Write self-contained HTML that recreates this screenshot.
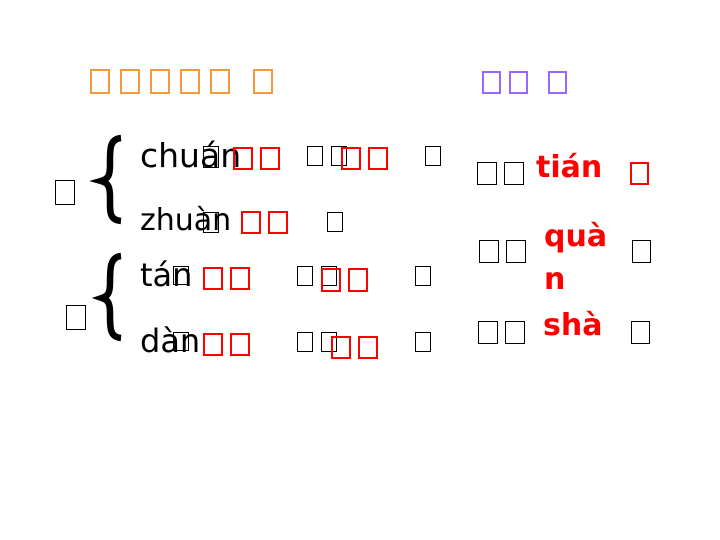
<!DOCTYPE html>
<html><head><meta charset="utf-8"><style>
body{margin:0;width:720px;height:540px;background:#fff;position:relative;overflow:hidden;font-family:"DejaVu Sans","Liberation Sans",sans-serif}
.b{position:absolute;box-sizing:border-box;border:1px solid #000}
.o{border-color:#f59a3c;border-width:2px}.p{border-color:#9966ff;border-width:2px}.r{border-color:#f00;border-width:2px}
.t{position:absolute;line-height:1;white-space:nowrap;color:#000}
.rb{color:#f00;font-weight:bold}
</style></head><body>
<div class="b o" style="left:90px;top:69px;width:20px;height:25px"></div>
<div class="b o" style="left:120px;top:69px;width:20px;height:25px"></div>
<div class="b o" style="left:150px;top:69px;width:20px;height:25px"></div>
<div class="b o" style="left:180px;top:69px;width:20px;height:25px"></div>
<div class="b o" style="left:210px;top:69px;width:20px;height:25px"></div>
<div class="b o" style="left:253px;top:69px;width:20px;height:25px"></div>
<div class="b p" style="left:482px;top:71px;width:19px;height:23px"></div>
<div class="b p" style="left:509px;top:71px;width:19px;height:23px"></div>
<div class="b p" style="left:548px;top:71px;width:19px;height:23px"></div>

<svg style="position:absolute;left:0;top:0" width="720" height="540">
<path d="M121,138 C109,139 110,150 110,165 C110,176 108,179 101,181 C108,183 110,186 110,197 C110,212 109,220 121,221" fill="none" stroke="#000" stroke-width="6.5"/>
<path d="M121,256 C110,257 110,268 110,283 C110,293 108,296 102,298 C108,300 110,303 110,313 C110,329 110,337 121,338" fill="none" stroke="#000" stroke-width="6.5"/>
</svg>

<div class="b" style="left:55px;top:180px;width:20px;height:25px"></div>
<div class="b" style="left:66px;top:305px;width:20px;height:25px"></div>

<div class="t" style="left:140px;top:139px;font-size:33px">chuán</div>
<div class="b" style="left:203px;top:146px;width:16px;height:22px"></div>
<div class="b r" style="left:233px;top:147px;width:20px;height:23px"></div>
<div class="b r" style="left:260px;top:147px;width:20px;height:23px"></div>
<div class="b" style="left:307px;top:146px;width:16px;height:20px"></div>
<div class="b" style="left:331px;top:146px;width:16px;height:20px"></div>
<div class="b r" style="left:341px;top:147px;width:20px;height:23px"></div>
<div class="b r" style="left:368px;top:147px;width:20px;height:23px"></div>
<div class="b" style="left:425px;top:146px;width:16px;height:20px"></div>

<div class="t" style="left:140px;top:206px;font-size:30px">zhuàn</div>
<div class="b" style="left:203px;top:212px;width:16px;height:21px"></div>
<div class="b r" style="left:241px;top:211px;width:20px;height:23px"></div>
<div class="b r" style="left:268px;top:211px;width:20px;height:23px"></div>
<div class="b" style="left:327px;top:212px;width:16px;height:20px"></div>

<div class="t" style="left:140px;top:259px;font-size:32px">tán</div>
<div class="b" style="left:173px;top:266px;width:16px;height:19px"></div>
<div class="b r" style="left:203px;top:267px;width:20px;height:23px"></div>
<div class="b r" style="left:230px;top:267px;width:20px;height:23px"></div>
<div class="b" style="left:297px;top:266px;width:16px;height:20px"></div>
<div class="b" style="left:321px;top:266px;width:16px;height:20px"></div>
<div class="b r" style="left:321px;top:268px;width:20px;height:24px"></div>
<div class="b r" style="left:348px;top:268px;width:20px;height:24px"></div>
<div class="b" style="left:415px;top:266px;width:16px;height:20px"></div>

<div class="t" style="left:140px;top:325px;font-size:32px">dàn</div>
<div class="b" style="left:173px;top:332px;width:16px;height:19px"></div>
<div class="b r" style="left:203px;top:333px;width:20px;height:23px"></div>
<div class="b r" style="left:230px;top:333px;width:20px;height:23px"></div>
<div class="b" style="left:297px;top:332px;width:16px;height:20px"></div>
<div class="b" style="left:321px;top:332px;width:16px;height:20px"></div>
<div class="b r" style="left:331px;top:336px;width:20px;height:23px"></div>
<div class="b r" style="left:358px;top:336px;width:20px;height:23px"></div>
<div class="b" style="left:415px;top:332px;width:16px;height:20px"></div>

<div class="b" style="left:477px;top:162px;width:20px;height:23px"></div>
<div class="b" style="left:504px;top:162px;width:20px;height:23px"></div>
<div class="t rb" style="left:536px;top:153px;font-size:30px">tián</div>
<div class="b r" style="left:630px;top:162px;width:19px;height:23px"></div>

<div class="b" style="left:479px;top:240px;width:20px;height:23px"></div>
<div class="b" style="left:506px;top:240px;width:20px;height:23px"></div>
<div class="t rb" style="left:544px;top:222px;font-size:30px">quà</div>
<div class="t rb" style="left:544px;top:265px;font-size:30px">n</div>
<div class="b" style="left:632px;top:240px;width:19px;height:23px"></div>

<div class="b" style="left:478px;top:321px;width:20px;height:23px"></div>
<div class="b" style="left:505px;top:321px;width:20px;height:23px"></div>
<div class="t rb" style="left:543px;top:311px;font-size:30px">shà</div>
<div class="b" style="left:631px;top:321px;width:19px;height:23px"></div>
</body></html>
